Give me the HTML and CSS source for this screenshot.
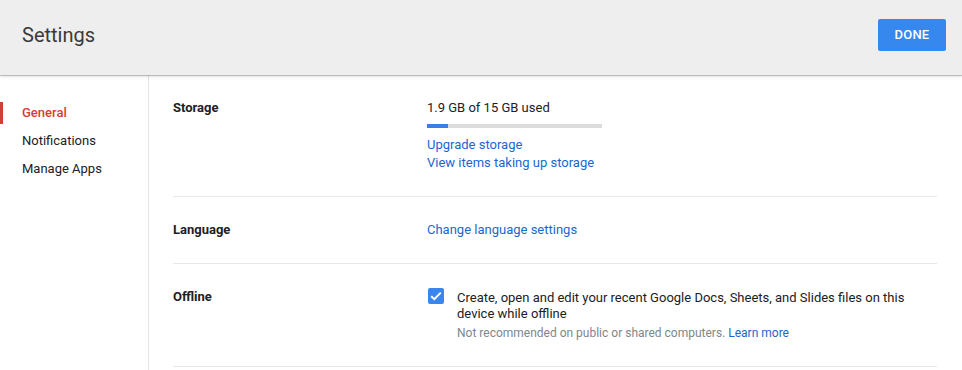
FILE: index.html
```html
<!DOCTYPE html>
<html lang="en">

<head>
    <meta charset="UTF-8">
    <meta name="viewport" content="width=device-width, initial-scale=1.0">
    <title>Settings</title>
    <link rel="stylesheet" href="styles.css">
</head>

<body>
    <header class="topbar">
        <h1 class="topbar-title">Settings</h1>
        <button class="done-btn" type="button">DONE</button>
    </header>

    <div class="layout">
        <nav class="sidebar">
            <a class="nav-item active" href="#">General</a>
            <a class="nav-item" href="#">Notifications</a>
            <a class="nav-item" href="#">Manage Apps</a>
        </nav>

        <main class="content">
            <section class="row">
                <div class="row-label">Storage</div>
                <div class="row-value">
                    <div class="usage">1.9 GB of 15 GB used</div>
                    <div class="usage-bar">
                        <div class="usage-fill" style="width: 12%"></div>
                    </div>
                    <a class="link" href="#">Upgrade storage</a>
                    <a class="link" href="#">View items taking up storage</a>
                </div>
            </section>

            <section class="row">
                <div class="row-label">Language</div>
                <div class="row-value">
                    <a class="link" href="#">Change language settings</a>
                </div>
            </section>

            <section class="row">
                <div class="row-label">Offline</div>
                <div class="row-value">
                    <label class="check-row">
                        <span class="checkbox">
                            <svg width="12" height="10" viewBox="0 0 12 10">
                                <path d="M1.2 5.2 L4.3 8.2 L10.8 1.6" fill="none" stroke="#fff" stroke-width="2"/>
                            </svg>
                        </span>
                        <span class="check-text">
                            Create, open and edit your recent Google Docs, Sheets, and Slides files on this device while offline
                            <span class="hint">Not recommended on public or shared computers. <a class="link inline" href="#">Learn more</a></span>
                        </span>
                    </label>
                </div>
            </section>
        </main>
    </div>
</body>

</html>
```

FILE: styles.css
```css
* {
    box-sizing: border-box;
}

body {
    margin: 0;
    font-family: Roboto, Arial, sans-serif;
    font-size: 13px;
    color: #202124;
    background-color: #fff;
}

.topbar {
    height: 75px;
    display: flex;
    align-items: center;
    justify-content: space-between;
    padding: 0 16px 6px 22px;
    background-color: #eeeeee;
    box-shadow: 0 1px 1px rgba(0, 0, 0, 0.22), 0 2px 4px rgba(0, 0, 0, 0.08);
    position: relative;
    z-index: 1;
}

.topbar-title {
    margin: 0;
    font-size: 20px;
    font-weight: 400;
    color: #3a3a3a;
}

.done-btn {
    width: 68px;
    height: 32px;
    border: none;
    border-radius: 2px;
    background-color: #3688ee;
    color: #fff;
    font-family: Roboto, Arial, sans-serif;
    font-size: 13px;
    font-weight: 500;
    letter-spacing: 0.2px;
}

.layout {
    display: flex;
    min-height: calc(100vh - 75px);
}

.sidebar {
    width: 149px;
    flex-shrink: 0;
    padding-top: 27px;
    border-right: 1px solid #e4e4e4;
    display: flex;
    flex-direction: column;
    gap: 6px;
}

.nav-item {
    position: relative;
    display: block;
    padding-left: 22px;
    line-height: 22px;
    color: #202124;
    text-decoration: none;
}

.nav-item.active {
    color: #d23f31;
    font-weight: 500;
}

.nav-item.active::before {
    content: "";
    position: absolute;
    left: 0;
    top: 0;
    width: 3px;
    height: 22px;
    background-color: #d23f31;
}

.content {
    flex: 1;
    padding: 0 25px 0 24px;
}

.row {
    display: flex;
    padding: 24px 0 24px;
    border-bottom: 1px solid #e8e8e8;
    line-height: 17px;
}

.row-label {
    width: 254px;
    flex-shrink: 0;
    font-weight: 700;
}

.row-value {
    flex: 1;
    display: flex;
    flex-direction: column;
}

.usage-bar {
    width: 175px;
    height: 4px;
    margin: 8px 0 8px;
    background-color: #dcdcdc;
}

.usage-fill {
    height: 100%;
    background-color: #3b7fe6;
}

.link {
    color: #1a66d2;
    text-decoration: none;
    line-height: 18px;
}

.link.inline {
    line-height: inherit;
}

.check-row {
    display: flex;
    gap: 13px;
    padding: 2px 0 1px;
}

.checkbox {
    width: 16px;
    height: 16px;
    margin-top: -2px;
    margin-left: 1px;
    flex-shrink: 0;
    border-radius: 2px;
    background-color: #3a86ee;
    display: flex;
    align-items: center;
    justify-content: center;
}

.check-text {
    display: flex;
    flex-direction: column;
    line-height: 16px;
}

.hint {
    margin-top: 3px;
    font-size: 12px;
    line-height: 16px;
    color: #80868b;
}
```
